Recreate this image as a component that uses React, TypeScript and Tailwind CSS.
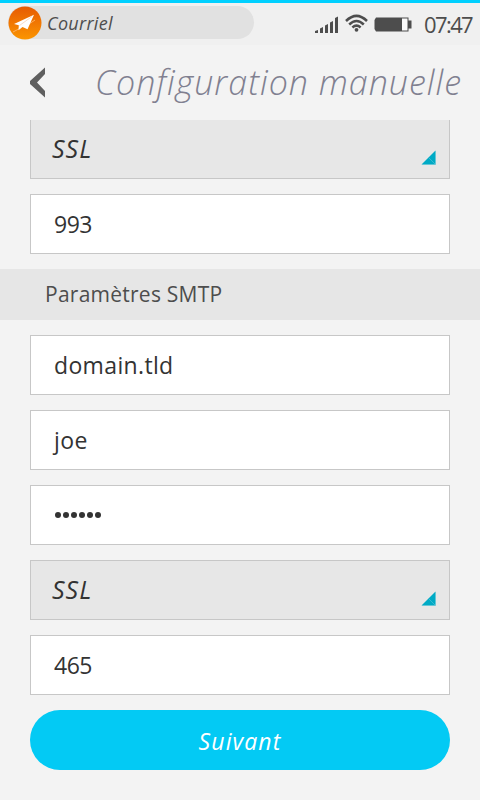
import React from 'react';

function SelectField({ value, clipped = false }: { value: string; clipped?: boolean }) {
  return (
    <div
      className={`flex w-full shrink-0 items-center justify-between border border-[#c7c7c7] bg-[#e7e7e7] pl-[21px] pr-[13px] ${
        clipped ? 'h-[59px] border-t-0' : 'h-[60px]'
      }`}
    >
      <span className="pb-[3px] text-[25px] italic leading-[34px] tracking-[1px] text-[#333]">{value}</span>
      <svg className="mt-[17px] h-[15px] w-[15px]" viewBox="0 0 15 15">
        <path d="M14.5 0.5V14.5H0.5Z" fill="#00aac5" />
        <path d="M7.5 7.5L14 14M14.5 1V14.5H1" stroke="#5cc5d6" strokeWidth="0.6" fill="none" />
      </svg>
    </div>
  );
}

function Field({ children }: { children: React.ReactNode }) {
  return (
    <div className="flex h-[60px] w-full shrink-0 items-center border border-[#c7c7c7] bg-white pl-[23px] text-[#333]">
      {children}
    </div>
  );
}

export default function App() {
  return (
    <div className="flex h-[800px] w-[480px] flex-col overflow-hidden bg-[#f3f3f3] font-['Open_Sans','Noto_Sans',sans-serif]">
      <div className="flex h-[45px] shrink-0 items-start border-t-[3px] border-[#00d0ff] bg-[#f0f0f0] pl-[8px] pt-[3px]">
        <div className="flex h-[33px] w-[246px] items-center rounded-l-full rounded-r-full bg-[#e1e1e1]">
          <svg className="h-[34px] w-[34px] shrink-0" viewBox="0 0 34 34">
            <defs>
              <linearGradient id="mail" x1="0" y1="0" x2="0" y2="1">
                <stop offset="0" stopColor="#e65a04" />
                <stop offset="1" stopColor="#fb9500" />
              </linearGradient>
            </defs>
            <circle cx="17" cy="17" r="16.5" fill="url(#mail)" />
            <path d="M5 26L11 22.8M19.5 19L27 14" stroke="#ffb566" strokeWidth="0.9" />
            <path d="M26 8.7L6 18L10.8 19.3L10.5 24.3L14.5 21L19.5 23.3Z" fill="#fff" />
            <path d="M24 10.5L11.5 19.5" stroke="#f3b78a" strokeWidth="0.5" />
          </svg>
          <span className="ml-[5px] text-[18px] italic leading-[24px] tracking-[0.3px] text-[#4d4d4d]">Courriel</span>
        </div>
        <div className="ml-[61px] mt-[9px] flex h-[18px] w-[97px] shrink-0 items-end">
          <svg className="h-[17px] w-[23px] shrink-0" viewBox="0 0 23 17">
            <path
              d="M0 17V15L3 14V17ZM5 17V12.5L8 11V17ZM10 17V9.5L13 8V17ZM15 17V6.5L18 5V17ZM20 17V2L23 0.5V17Z"
              fill="#4d4d4d"
            />
          </svg>
          <svg className="mb-[1px] ml-[7px] h-[18px] w-[23px] shrink-0" viewBox="0 0 23 18" fill="none" stroke="#4d4d4d" strokeWidth="2.5">
            <path d="M1 7Q11.5 -3.2 22 7M4.2 10.5Q11.5 3.5 18.8 10.5M7.4 13.5Q11.5 9.8 15.6 13.5" />
            <circle cx="11.5" cy="15.8" r="1.9" fill="#4d4d4d" stroke="none" />
          </svg>
          <svg className="mb-[1px] ml-[6px] h-[15px] w-[38px] shrink-0" viewBox="0 0 38 15">
            <path d="M2 0.5H34.5V3.5H37.5V11.5H34.5V14.5H2L0.5 12V3Z" fill="#4d4d4d" />
            <path d="M28 1.5H33.5V13.5H28Z" fill="#fafafa" />
          </svg>
        </div>
        <span className="ml-[12px] mt-[4px] text-[22px] leading-[28px] tracking-[-1.6px] text-[#4d4d4d]">07:47</span>
      </div>

      <div className="flex h-[75px] shrink-0 items-start">
        <svg className="ml-[30px] mt-[22px] h-[32px] w-[16px]" viewBox="0 0 16 32">
          <path d="M15 0.5V7L7 15.5L15 24V30.5L0 17V14Z" fill="#5f5f5f" />
        </svg>
        <h1 className="ml-[49px] mt-[14px] whitespace-nowrap text-[34px] font-light italic leading-[46px] tracking-[1px] text-[#808090]">
          Configuration manuelle
        </h1>
      </div>

      <div className="flex shrink-0 flex-col gap-[15px] px-[30px]">
        <SelectField value="SSL" clipped />
        <Field><span className="text-[23px] tracking-[-0.5px]">993</span></Field>
      </div>

      <h2 className="my-[15px] flex h-[51px] shrink-0 items-center bg-[#e6e6e6] pl-[45px] text-[21px] tracking-[0.25px] text-[#4d4d4d]">
        Paramètres SMTP
      </h2>

      <div className="flex shrink-0 flex-col gap-[15px] px-[30px]">
        <Field><span className="text-[23px] tracking-[0.35px]">domain.tld</span></Field>
        <Field><span className="text-[23px] tracking-[0.4px]">joe</span></Field>
        <Field>
          <span className="flex gap-[2px] pl-[1px]">
            {[0, 1, 2, 3, 4, 5].map((i) => (
              <i key={i} className="h-[6px] w-[6px] rounded-full bg-[#333]" />
            ))}
          </span>
        </Field>
        <SelectField value="SSL" />
        <Field><span className="text-[23px] tracking-[-0.5px]">465</span></Field>
        <button className="h-[60px] w-full rounded-full bg-[#03caf4] pt-[3px] text-[23px] italic tracking-[1.1px] text-white">
          Suivant
        </button>
      </div>
    </div>
  );
}
